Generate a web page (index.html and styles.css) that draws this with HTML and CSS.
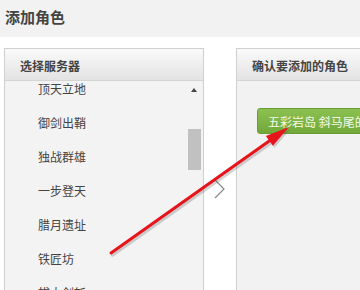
FILE: index.html
```html
<!DOCTYPE html>
<html>
<head>
<meta charset="utf-8">
<link rel="stylesheet" href="styles.css">
</head>
<body>
<div class="page">
  <div class="topbar"><span class="title">添加角色</span></div>
  <div class="main">
    <div class="panel left">
      <div class="panel-head">选择服务器</div>
      <div class="panel-body">
        <div class="list-wrap">
          <ul class="list">
            <li>顶天立地</li>
            <li>御剑出鞘</li>
            <li>独战群雄</li>
            <li>一步登天</li>
            <li>腊月遗址</li>
            <li>铁匠坊</li>
            <li>拔太剑斩</li>
          </ul>
        </div>
        <div class="scrollbar">
          <div class="up"></div>
          <div class="thumb"></div>
        </div>
      </div>
    </div>
    <div class="middle">
      <svg class="chev" width="12" height="20" viewBox="0 0 12 20"><path d="M1 1 L10 10 L1 19" fill="none" stroke="#8a8a8a" stroke-width="1.2"/></svg>
    </div>
    <div class="panel right">
      <div class="panel-head">确认要添加的角色</div>
      <div class="panel-body rbody">
        <div class="tag">五彩岩岛 斜马尾的小姐</div>
      </div>
    </div>
  </div>
  <svg class="arrow" width="360" height="290" viewBox="0 0 360 290">
    <g opacity="0.25" transform="translate(1.5,2)">
      <line x1="111" y1="253" x2="272" y2="139" stroke="#555" stroke-width="3.5" stroke-linecap="round"/>
      <polygon points="289,127 272.9,145.8 265.9,136" fill="#555"/>
    </g>
    <line x1="111" y1="253" x2="272" y2="139" stroke="#e8141b" stroke-width="3" stroke-linecap="round"/>
    <polygon points="289,127 272.9,145.8 265.9,136" fill="#e8141b"/>
  </svg>
</div>
</body>
</html>
```
FILE: styles.css
```css
html, body {
  margin: 0;
  padding: 0;
  background: #fff;
  font-family: "Noto Sans CJK SC", "Noto Sans", sans-serif;
  overflow: hidden;
}
.page {
  position: relative;
  width: 360px;
  height: 290px;
  overflow: hidden;
}
.topbar {
  height: 37px;
  background: #f2f2f2;
  padding-left: 5px;
  box-sizing: border-box;
}
.title {
  display: block;
  line-height: 33px;
  font-size: 15px;
  font-weight: bold;
  color: #444;
}
.main {
  display: flex;
  padding: 11px 0 0 4px;
  height: 300px;
  box-sizing: border-box;
}
.panel {
  border: 1px solid #cfcfcf;
  border-bottom: none;
  display: flex;
  flex-direction: column;
  box-sizing: border-box;
}
.left {
  width: 200px;
  flex: none;
}
.right {
  width: 200px;
  flex: none;
  border-right: none;
}
.panel-head {
  height: 32px;
  box-sizing: border-box;
  padding: 2px 0 0 15px;
  line-height: 30px;
  font-size: 12px;
  font-weight: bold;
  color: #444;
  background: linear-gradient(#fafafa, #e3e3e3);
  border-bottom: 1px solid #d4d4d4;
  white-space: nowrap;
}
.panel-body {
  flex: 1;
  display: flex;
  background: #f3f3f3;
}
.list-wrap {
  flex: 1;
  overflow: hidden;
}
.list {
  list-style: none;
  margin: -9px 0 0 0;
  padding: 0 0 0 33px;
}
.list li {
  height: 34px;
  line-height: 34px;
  font-size: 12px;
  color: #444;
}
.scrollbar {
  width: 16px;
  flex: none;
  padding-left: 1px;
  box-sizing: border-box;
}
.up {
  width: 0;
  height: 0;
  margin: 7px 0 0 3px;
  border-left: 3.5px solid transparent;
  border-right: 3.5px solid transparent;
  border-bottom: 4px solid #444;
}
.thumb {
  width: 13px;
  height: 41px;
  margin-top: 37px;
  background: #c1c1c1;
}
.middle {
  width: 32px;
  flex: none;
  box-sizing: border-box;
  padding: 131px 0 0 10px;
}
.chev {
  display: block;
}
.rbody {
  display: block;
  padding: 27px 0 0 20px;
  background: #f2f2f2;
}
.tag {
  display: inline-block;
  height: 26px;
  line-height: 26px;
  padding: 0 10px;
  border-radius: 3px;
  background: linear-gradient(#8cc152, #72a83a);
  border: 1px solid #6a9c34;
  box-sizing: border-box;
  color: #f4fbe8;
  font-size: 12px;
  white-space: nowrap;
}
.arrow {
  position: absolute;
  left: 0;
  top: 0;
  pointer-events: none;
}
```
